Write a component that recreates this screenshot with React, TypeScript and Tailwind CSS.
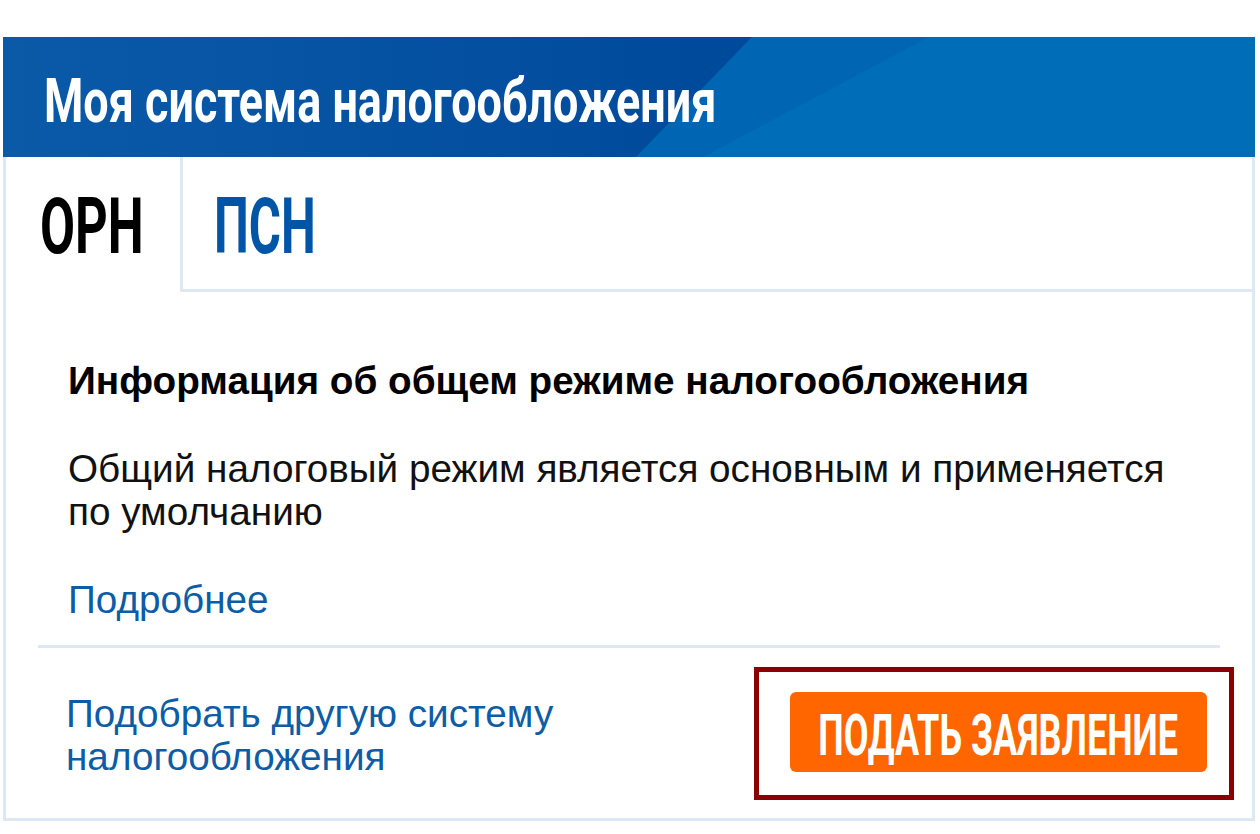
export default function App() {
  const cond = "font-['Roboto','Liberation_Sans',sans-serif] font-bold inline-block whitespace-nowrap leading-none";
  return (
    <div className="min-h-[834px] bg-white pt-[37px] pl-[3px] font-['Liberation_Sans',Arial,sans-serif]">
      <div className="w-[1252px]">
        {/* header */}
        <div className="relative h-[120px] overflow-hidden bg-[linear-gradient(90deg,#0a5aa8_0%,#0652a2_30%,#004a9c_55%)]">
          <div className="absolute inset-y-0 left-[633px] right-[-300px] origin-bottom-left skew-x-[-44deg] bg-[#0066b3]" />
          <div className="absolute inset-y-0 left-[700px] right-[-300px] origin-bottom-left skew-x-[-62deg] bg-[#006db9]" />
          <div className="relative pl-[41px] pt-[33px]">
            <span className={`${cond} origin-left scale-x-[0.725] text-[62px] text-white`}>
              Моя система налогообложения
            </span>
          </div>
        </div>

        <div className="border-x-[3px] border-b-[3px] border-[#dde8f4]">
          {/* tabs */}
          <div className="flex h-[135px]">
            <div className="w-[174px] pl-[34px] pt-[32px]">
              <span className={`${cond} origin-left scale-x-[0.66] text-[77px] text-black`}>ОРН</span>
            </div>
            <div className="flex-1 border-l-[3px] border-b-[3px] border-[#dde8f4] pl-[31px] pt-[32px]">
              <span className={`${cond} origin-left scale-x-[0.64] text-[77px] text-[#0055a6]`}>ПСН</span>
            </div>
          </div>

          {/* content */}
          <div className="pl-[62px] text-[38.7px] leading-[43px]">
            <h2 className="mt-[67px] font-bold text-black">
              Информация об общем режиме налогообложения
            </h2>
            <p className="mt-[45px] w-[1120px] text-[#111]">
              Общий налоговый режим является основным и применяется по умолчанию
            </p>
            <a className="mt-[45px] block text-[#0d5ca6]">Подробнее</a>
          </div>

          <div className="mx-[32px] mt-[24px] h-[3px] bg-[#dde8f4]" />

          {/* bottom */}
          <div className="mt-[19px] mb-[18px] flex items-center justify-between pl-[60px] pr-[18px]">
            <a className="pt-[2px] text-[38.7px] leading-[43px] text-[#0d5ca6]">
              Подобрать другую систему
              <br />
              налогообложения
            </a>
            <div className="h-[133px] w-[480px] border-[5px] border-[#8b0000] pl-[31px] pt-[20px]">
              <button className="flex h-[80px] w-[417px] justify-center rounded-[6px] bg-[#ff6600] pt-[14px]">
                <span className={`${cond} scale-x-[0.62] text-[58px] text-white`}>ПОДАТЬ ЗАЯВЛЕНИЕ</span>
              </button>
            </div>
          </div>
        </div>
      </div>
    </div>
  );
}
